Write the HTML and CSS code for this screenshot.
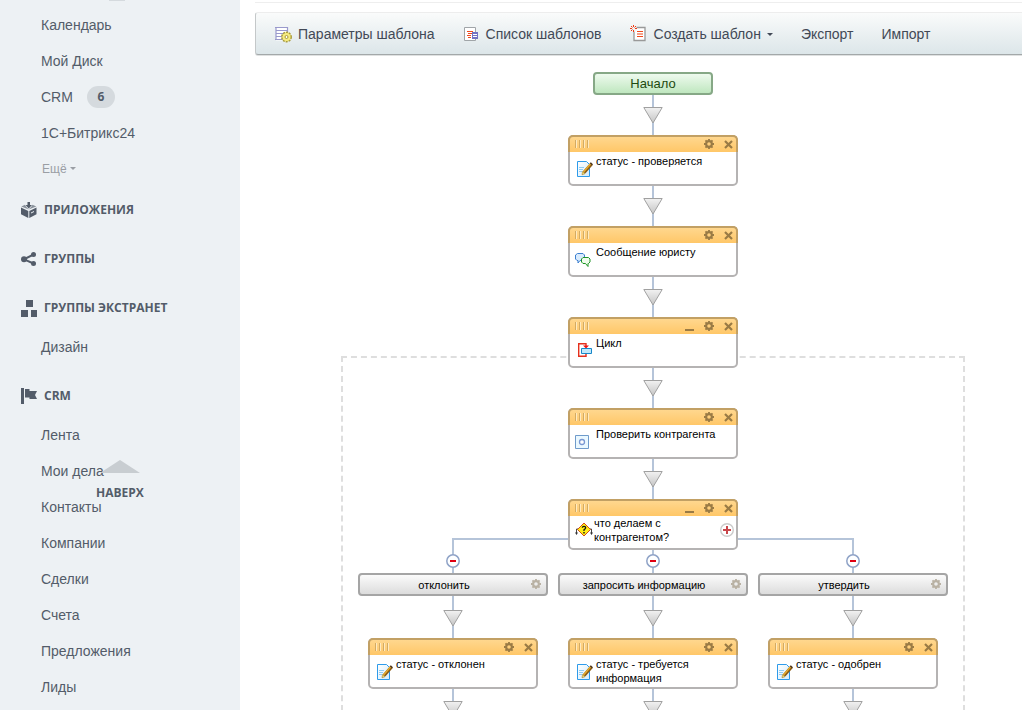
FILE: index.html
```html
<!DOCTYPE html>
<html lang="ru">
<head>
<meta charset="utf-8">
<title>Шаблон бизнес-процесса</title>
<link rel="stylesheet" href="styles.css">
</head>
<body>
<svg class="sprite" aria-hidden="true">
  <defs>
    <linearGradient id="arrow-fill" x1="0" y1="0" x2="0" y2="1"><stop offset="0" stop-color="#f2f2f2"/><stop offset="1" stop-color="#c4c4c4"/></linearGradient>
    <linearGradient id="page-fill" x1="0" y1="0" x2="1" y2="1"><stop offset="0" stop-color="#fff"/><stop offset="1" stop-color="#d3ebfb"/></linearGradient>
  </defs>
  <symbol id="arrow" viewBox="0 0 20 17"><path d="M.8 .5H19.200L10 16Z" fill="url(#arrow-fill)" stroke="#a0a0a0"/></symbol>
  <symbol id="gear" viewBox="0 0 11 11"><g fill="currentColor"><path fill-rule="evenodd" d="M5.500 1.200a4.300 4.300 0 1 0 0 8.600a4.300 4.300 0 0 0 0-8.600zM5.500 3.500a2 2 0 1 1 0 4a2 2 0 0 1 0-4z"/><path d="M4.500 0h2v2h-2zM4.500 9h2v2h-2zM0 4.500h2v2H0zM9 4.500h2v2H9zM.9 2.300L2.300.9l1.400 1.400L2.300 3.700zM7.300 2.300L8.700.9l1.400 1.400L8.700 3.700zM.9 8.700l1.400-1.400 1.400 1.400-1.400 1.400zM7.300 8.700l1.400-1.400 1.400 1.400-1.400 1.400z"/></g></symbol>
  <symbol id="close" viewBox="0 0 9 9"><path d="M1 1L8 8M8 1L1 8" stroke="currentColor" stroke-width="2.200"/></symbol>
  <symbol id="edit" viewBox="0 0 16 16"><path d="M.5 .5H9.500L12.500 3.500V15.500H.5Z" fill="url(#page-fill)" stroke="#2d9bea"/><path d="M2 6.500h5M2 8.500h4M2 10.500h3" stroke="#8ecbf3"/><path d="M7 11.500L14.500 3" stroke="#8a5a14" stroke-width="3.400"/><path d="M6.500 11L13.500 3" stroke="#e6ac2c" stroke-width="1.500"/><path d="M5 13.800L5.500 10.500L8 12.700Z" fill="#ffe36b" stroke="#8a6a1b" stroke-width=".5"/><path d="M13.300 1.800l2.200 2" stroke="#4a3217" stroke-width="1.500"/></symbol>
  <symbol id="chat" viewBox="0 0 16 14"><path d="M2.500.5H8L9.500 2V6L8 7.500H5L3 10V7.500H2L.5 6V2Z" fill="#d8ebfd" stroke="#3c7fd0"/><path d="M8 4.500H13.500L15 6V9L13.500 10.500H13V13.500L10.500 10.500H8L6.500 9V6Z" fill="#effcec" stroke="#1e9426"/></symbol>
  <symbol id="loop" viewBox="0 0 16 14"><path d="M9 3V.7H1.700V13.300H9V11" fill="none" stroke="#e5301c" stroke-width="1.400"/><path d="M6 2.500H12L9 5.500Z" fill="#e11"/><path d="M4.500 5.500H14.500V10.500H4.500Z" fill="#bfe8fb" stroke="#1787c9"/></symbol>
  <symbol id="activity" viewBox="0 0 14 14"><path d="M.5.5H13.500V13.500H.5Z" fill="#eaf8ff" stroke="#6f9bcb"/><circle cx="7" cy="7" r="2.500" fill="#fff" stroke="#7897d2" stroke-width="1.300"/></symbol>
  <symbol id="question" viewBox="0 0 18 16"><path d="M3 7H1.500V12M15 7H16.500V12" fill="none" stroke="#444"/><path d="M0 10.500H3L1.500 13ZM15 10.500H18L16.500 13Z" fill="#333"/><path d="M9 1L15.500 7.500L9 14L2.500 7.500Z" fill="#ffee14" stroke="#d44b16"/><path d="M7.300 5.800Q7.400 4.300 9 4.300Q10.700 4.300 10.600 5.800Q10.400 6.800 9 7.700V9" fill="none" stroke="#111" stroke-width="1.300"/><path d="M8.300 10h1.400v1.400H8.300z" fill="#111"/></symbol>
  <symbol id="plus" viewBox="0 0 14 14"><circle cx="7" cy="7" r="6.300" fill="#fff" stroke="#cbcbcb" stroke-width="1.400"/><path d="M7 3V11M3 7H11" stroke="#c8464b" stroke-width="2"/></symbol>
  <symbol id="minus" viewBox="0 0 14 14"><circle cx="7" cy="7" r="6.200" fill="#fff" stroke="#8fa3c7" stroke-width="1.500"/><path d="M4 7H10" stroke="#e00012" stroke-width="2"/></symbol>
</svg>

<div class="page">
  <nav class="sidebar" aria-label="Меню">
    <span class="sidebar-edge"></span>
    <ul class="menu">
      <li><a class="menu-link" href="#">Календарь</a></li>
      <li><a class="menu-link" href="#">Мой Диск</a></li>
      <li><a class="menu-link" href="#">CRM <span class="counter">6</span></a></li>
      <li><a class="menu-link" href="#">1С+Битрикс24</a></li>
      <li><button class="menu-more" type="button">Ещё<span class="caret"></span></button></li>
    </ul>
    <h2 class="menu-title"><svg class="menu-icon" viewBox="0 0 16 16"><path d="M0 5.500L7.300 9V16L0 12.200ZM15.500 5.500L8.300 9V16L15.500 12.200Z" fill="#535c69"/><path d="M6.500 0H9V3H11L7.700 6.500L4.500 3H6.500Z" fill="#535c69"/><path d="M.3 4.600L4 2.800L5 4.500L7.700 7.400ZM15.300 4.600L11.500 2.800L10.500 4.500L7.700 7.400Z" fill="#8a929b"/><path d="M10 11L13 9.500" stroke="#edf1f4"/></svg>ПРИЛОЖЕНИЯ</h2>
    <h2 class="menu-title"><svg class="menu-icon" viewBox="0 0 16 16"><path d="M12.500 3.500L3 8.300L12.500 12.500" fill="none" stroke="#535c69" stroke-width="2"/><circle cx="12.500" cy="3.500" r="2.500" fill="#535c69"/><circle cx="3" cy="8.200" r="3" fill="#535c69"/><circle cx="12.500" cy="12.500" r="2.500" fill="#535c69"/></svg>ГРУППЫ</h2>
    <h2 class="menu-title"><svg class="menu-icon menu-icon-tall" viewBox="0 0 16 17"><path d="M5 0h7v7H5zM0 10h7v7H0zM10 10h6v7h-6z" fill="#535c69"/></svg>ГРУППЫ ЭКСТРАНЕТ</h2>
    <ul class="menu menu-section">
      <li><a class="menu-link" href="#">Дизайн</a></li>
    </ul>
    <h2 class="menu-title"><svg class="menu-icon" viewBox="0 0 16 16"><path d="M0 0H3V16H0ZM4 1H8.500V3H16L14 7L16 11H8.500V9.500H4Z" fill="#535c69"/></svg>CRM</h2>
    <ul class="menu menu-section">
      <li><a class="menu-link" href="#">Лента</a></li>
      <li><a class="menu-link" href="#">Мои дела</a></li>
      <li><a class="menu-link" href="#">Контакты</a></li>
      <li><a class="menu-link" href="#">Компании</a></li>
      <li><a class="menu-link" href="#">Сделки</a></li>
      <li><a class="menu-link" href="#">Счета</a></li>
      <li><a class="menu-link" href="#">Предложения</a></li>
      <li><a class="menu-link" href="#">Лиды</a></li>
    </ul>
    <a class="to-top" href="#"><svg class="to-top-icon" viewBox="0 0 40 13"><path d="M20 0L40 13H0Z" fill="#c8cdd1"/></svg>НАВЕРХ</a>
  </nav>

  <main class="main">
    <div class="toolbar" role="toolbar">
      <button class="tool" type="button"><svg class="tool-icon" viewBox="0 0 18 18"><path d="M1 2.500H13V15.500H1Z" fill="#fff"/><path d="M0 2.500H13M1 5.500H13M1 8.500H13M1 11.500H13M0 14.500H13M1 2V15M12.500 2V15" stroke="#9999cc" stroke-width="1.200"/><circle cx="11.500" cy="12" r="4.700" fill="#f1e66b" stroke="#a89a3c" stroke-width="1.500" stroke-dasharray="2 1"/><circle cx="11.500" cy="12" r="3.800" fill="#f6ec83"/><circle cx="11.500" cy="12" r="1.500" fill="#fff" stroke="#a89a3c"/></svg>Параметры шаблона</button>
      <button class="tool" type="button"><svg class="tool-icon" viewBox="0 0 18 18"><path d="M1.500 2.500H12.500V15.500H1.500Z" fill="#fff" stroke="#a0a5a8"/><path d="M4 6.500H10M5 8.500H10M4 10.500H8M5 12.500H8" stroke="#f04a1d" stroke-width="1.200"/><path d="M9 7H15V14H9Z" fill="#7373c4"/><path d="M10 9.500H14M10 11.500H14" stroke="#fff"/></svg>Список шаблонов</button>
      <button class="tool tool-create" type="button"><svg class="tool-icon" viewBox="0 0 18 18"><path d="M4 2.500H15V15.500H4Z" fill="#fff" stroke="#999" stroke-width="1.300"/><path d="M7 6.500H13M7 9H13M7 11.500H13" stroke="#f04a1d" stroke-width="1.200"/><path d="M3.500 0V7M0 3.500H7M1 1L6 6M6 1L1 6" stroke="#f0f3f4" stroke-width="2"/><path d="M3.500 0V2M3.500 5V7M0 3.500H2M5 3.500H7M1 1L2.500 2.500M6 1L4.500 2.500M1 6L2.500 4.500" stroke="#f23a12"/></svg>Создать шаблон<span class="caret"></span></button>
      <button class="tool" type="button">Экспорт</button>
      <button class="tool" type="button">Импорт</button>
    </div>

    <div class="flow">
      <div class="start">Начало</div>
      <div class="connector"><svg class="arrow"><use href="#arrow"/></svg></div>
      <article class="card">
        <header class="card-head"><span class="grip"></span><button class="act" type="button" aria-label="Настройки"><svg class="gear"><use href="#gear"/></svg></button><button class="act" type="button" aria-label="Удалить"><svg class="close"><use href="#close"/></svg></button></header>
        <div class="card-body"><span class="card-icon"><svg class="icon-edit"><use href="#edit"/></svg></span><p class="card-text">статус - проверяется</p></div>
      </article>
      <div class="connector"><svg class="arrow"><use href="#arrow"/></svg></div>
      <article class="card">
        <header class="card-head"><span class="grip"></span><button class="act" type="button" aria-label="Настройки"><svg class="gear"><use href="#gear"/></svg></button><button class="act" type="button" aria-label="Удалить"><svg class="close"><use href="#close"/></svg></button></header>
        <div class="card-body"><span class="card-icon card-icon-wide"><svg class="icon-chat"><use href="#chat"/></svg></span><p class="card-text">Сообщение юристу</p></div>
      </article>
      <div class="connector"><svg class="arrow"><use href="#arrow"/></svg></div>
      <article class="card">
        <header class="card-head"><span class="grip"></span><button class="act act-fold" type="button" aria-label="Свернуть"></button><button class="act" type="button" aria-label="Настройки"><svg class="gear"><use href="#gear"/></svg></button><button class="act" type="button" aria-label="Удалить"><svg class="close"><use href="#close"/></svg></button></header>
        <div class="card-body"><span class="card-icon"><svg class="icon-chat"><use href="#loop"/></svg></span><p class="card-text">Цикл</p></div>
      </article>

      <section class="loop">
        <div class="connector"><svg class="arrow"><use href="#arrow"/></svg></div>
        <article class="card">
          <header class="card-head"><span class="grip"></span><button class="act" type="button" aria-label="Настройки"><svg class="gear"><use href="#gear"/></svg></button><button class="act" type="button" aria-label="Удалить"><svg class="close"><use href="#close"/></svg></button></header>
          <div class="card-body"><span class="card-icon card-icon-wide"><svg class="round"><use href="#activity"/></svg></span><p class="card-text">Проверить контрагента</p></div>
        </article>
        <div class="connector"><svg class="arrow"><use href="#arrow"/></svg></div>
        <article class="card card-condition">
          <header class="card-head"><span class="grip"></span><button class="act act-fold" type="button" aria-label="Свернуть"></button><button class="act" type="button" aria-label="Настройки"><svg class="gear"><use href="#gear"/></svg></button><button class="act" type="button" aria-label="Удалить"><svg class="close"><use href="#close"/></svg></button></header>
          <div class="card-body"><span class="card-icon"><svg class="icon-question"><use href="#question"/></svg></span><p class="card-text">что делаем с контрагентом?</p><button class="add" type="button" aria-label="Добавить ветвь"><svg class="round"><use href="#plus"/></svg></button></div>
        </article>

        <div class="fork">
          <div class="branch">
            <div class="stem"><button class="act" type="button" aria-label="Удалить ветвь"><svg class="round"><use href="#minus"/></svg></button></div>
            <div class="branch-label"><span class="branch-name">отклонить</span><button class="act" type="button" aria-label="Настройки"><svg class="gear"><use href="#gear"/></svg></button></div>
            <div class="connector connector-branch"><svg class="arrow"><use href="#arrow"/></svg></div>
            <article class="card">
              <header class="card-head"><span class="grip"></span><button class="act" type="button" aria-label="Настройки"><svg class="gear"><use href="#gear"/></svg></button><button class="act" type="button" aria-label="Удалить"><svg class="close"><use href="#close"/></svg></button></header>
              <div class="card-body"><span class="card-icon"><svg class="icon-edit"><use href="#edit"/></svg></span><p class="card-text">статус - отклонен</p></div>
            </article>
            <div class="connector"><svg class="arrow"><use href="#arrow"/></svg></div>
          </div>
          <div class="branch">
            <div class="stem"><button class="act" type="button" aria-label="Удалить ветвь"><svg class="round"><use href="#minus"/></svg></button></div>
            <div class="branch-label"><span class="branch-name">запросить информацию</span><button class="act" type="button" aria-label="Настройки"><svg class="gear"><use href="#gear"/></svg></button></div>
            <div class="connector connector-branch"><svg class="arrow"><use href="#arrow"/></svg></div>
            <article class="card">
              <header class="card-head"><span class="grip"></span><button class="act" type="button" aria-label="Настройки"><svg class="gear"><use href="#gear"/></svg></button><button class="act" type="button" aria-label="Удалить"><svg class="close"><use href="#close"/></svg></button></header>
              <div class="card-body"><span class="card-icon"><svg class="icon-edit"><use href="#edit"/></svg></span><p class="card-text">статус - требуется информация</p></div>
            </article>
            <div class="connector"><svg class="arrow"><use href="#arrow"/></svg></div>
          </div>
          <div class="branch">
            <div class="stem"><button class="act" type="button" aria-label="Удалить ветвь"><svg class="round"><use href="#minus"/></svg></button></div>
            <div class="branch-label"><span class="branch-name">утвердить</span><button class="act" type="button" aria-label="Настройки"><svg class="gear"><use href="#gear"/></svg></button></div>
            <div class="connector connector-branch"><svg class="arrow"><use href="#arrow"/></svg></div>
            <article class="card">
              <header class="card-head"><span class="grip"></span><button class="act" type="button" aria-label="Настройки"><svg class="gear"><use href="#gear"/></svg></button><button class="act" type="button" aria-label="Удалить"><svg class="close"><use href="#close"/></svg></button></header>
              <div class="card-body"><span class="card-icon"><svg class="icon-edit"><use href="#edit"/></svg></span><p class="card-text">статус - одобрен</p></div>
            </article>
            <div class="connector"><svg class="arrow"><use href="#arrow"/></svg></div>
          </div>
        </div>
      </section>
    </div>
  </main>
</div>
</body>
</html>
```

FILE: styles.css
```css
* {
  box-sizing: border-box;
}

body {
  margin: 0;
  font-family: "Liberation Sans", Arial, sans-serif;
  font-size: 14px;
  background: #fff;
}

button {
  padding: 0;
  border: 0;
  background: none;
  color: inherit;
  font: inherit;
}

a {
  color: inherit;
  text-decoration: none;
}

svg {
  display: block;
}

.sprite {
  position: absolute;
  width: 0;
  height: 0;
}

.page {
  display: flex;
  height: 100vh;
  overflow: hidden;
}

/* Sidebar */

.sidebar {
  position: relative;
  flex: 0 0 240px;
  overflow: hidden;
  background: #edf1f4;
  color: #535c69;
}

.sidebar-edge {
  display: block;
  width: 16px;
  height: 1px;
  margin: 0 0 6px 109px;
  background: #d5dade;
}

.menu {
  margin: 0;
  padding: 0 0 0 41px;
  list-style: none;
}

.menu-section {
  padding-bottom: 3px;
}

.menu-link {
  display: flex;
  align-items: center;
  gap: 14px;
  height: 36px;
}

.counter {
  width: 28px;
  border-radius: 11px;
  background: #d5dade;
  font: bold 12px/22px "Open Sans", sans-serif;
  text-align: center;
}

.menu-more {
  display: flex;
  align-items: center;
  gap: 3px;
  height: 31px;
  padding: 4px 0 0 1px;
  color: #9a9ea4;
  font-size: 12px;
}

.caret {
  border: 3px solid transparent;
  border-top-color: currentColor;
  border-bottom-width: 0;
}

.menu-title {
  display: flex;
  align-items: center;
  gap: 7px;
  height: 42px;
  margin: 7px 0 0;
  padding-left: 21px;
  font: bold 12px/16px "Open Sans", sans-serif;
}

.menu-icon {
  width: 16px;
  height: 16px;
}

.menu-icon-tall {
  height: 17px;
}

.to-top {
  position: absolute;
  top: 460px;
  left: 0;
  display: flex;
  flex-direction: column;
  align-items: center;
  gap: 12px;
  width: 100%;
  font: bold 12px/16px "Open Sans", sans-serif;
}

.to-top-icon {
  width: 40px;
  height: 13px;
}

/* Main area */

.main {
  flex: 1;
  min-width: 0;
  margin: 2px 0 0 15px;
  border-top: 1px solid #eee;
}

.toolbar {
  display: flex;
  align-items: center;
  gap: 28px;
  height: 43px;
  margin-top: 9px;
  padding: 1px 0 0 19px;
  border: solid;
  border-width: 1px 0 1px 1px;
  border-color: #ededed transparent #a3a8a9 #c4c8c9;
  border-radius: 3px 0 0 3px;
  background: linear-gradient(#fafbfb, #dce6e9);
  box-shadow: 0 1px #dfe1e1;
  color: #424956;
}

.tool {
  display: flex;
  align-items: center;
  gap: 5px;
  white-space: nowrap;
}

.tool-create {
  gap: 6px;
}

.tool-icon {
  width: 18px;
  height: 18px;
}

/* Diagram */

.flow {
  display: flex;
  flex-direction: column;
  align-items: center;
  padding: 17px 0 0 29px;
  color: #000;
  font-size: 11px;
  line-height: 14px;
}

.start {
  width: 120px;
  border: 2px solid #86a886;
  border-radius: 4px;
  background: linear-gradient(#eefaee, #bfe7bf);
  color: #1e4b10;
  font-size: 13px;
  line-height: 19px;
  text-align: center;
}

.connector {
  width: 20px;
  height: 40px;
  padding-top: 12px;
  background: linear-gradient(#b5c4d9, #b5c4d9) center / 2px 100% no-repeat;
}

.connector-branch {
  height: 42px;
  padding-top: 14px;
}

.arrow {
  width: 20px;
  height: 17px;
}

.card {
  z-index: 1;
  width: 170px;
  min-height: 51px;
  border: 2px solid #b5b3b3;
  border-radius: 5px;
  background: #fff;
}

.card-head {
  display: flex;
  align-items: center;
  gap: 10px;
  height: 17px;
  margin: -2px -2px 0;
  padding: 0 3px 1px 5px;
  border: 2px solid #c2a064;
  border-bottom: 0;
  border-radius: 5px 5px 0 0;
  background: linear-gradient(#ffd78e, #ffc768);
  color: #9a7b45;
}

.grip {
  width: 14px;
  height: 8px;
  margin-right: auto;
  background: repeating-linear-gradient(90deg, #d3ab63 0 1px, #ffeac0 1px 2px, transparent 2px 4px);
}

.act {
  display: block;
}

.act-fold {
  align-self: flex-end;
  width: 9px;
  height: 2px;
  margin-bottom: 2px;
  background: currentColor;
}

.gear {
  width: 10px;
  height: 10px;
}

.close {
  width: 9px;
  height: 9px;
}

.card-body {
  display: flex;
  align-items: flex-start;
}

.card-icon {
  flex: none;
  width: 26px;
  padding: 9px 0 0 7px;
}

.card-icon-wide {
  padding: 10px 0 0 5px;
}

.card-text {
  flex: 1;
  margin: 0;
  padding-top: 2px;
}

.icon-edit {
  width: 16px;
  height: 16px;
}

.icon-chat {
  width: 16px;
  height: 14px;
}

.icon-question {
  width: 18px;
  height: 16px;
}

.card-condition .card-icon {
  width: 24px;
  padding: 6px 0 0 5px;
}

.card-condition .card-text {
  padding-top: 0;
}

.add {
  align-self: center;
  margin-right: 2px;
}

.round {
  width: 14px;
  height: 14px;
}

.loop {
  display: flex;
  flex-direction: column;
  align-items: center;
  width: 624px;
  margin-top: -12px;
  padding-top: 10px;
  padding-bottom: 20px;
  border: 2px dashed #dedede;
}

.fork {
  position: relative;
  display: grid;
  grid-template-columns: repeat(3, 190px);
  gap: 10px;
  margin-top: -12px;
}

.fork::before {
  content: "";
  position: absolute;
  top: 0;
  right: 94px;
  left: 94px;
  height: 2px;
  background: #b5c4d9;
}

.branch {
  display: flex;
  flex-direction: column;
  align-items: center;
}

.stem {
  height: 35px;
  padding-top: 16px;
  background: linear-gradient(#b5c4d9, #b5c4d9) center / 2px 100% no-repeat;
}

.branch-label {
  display: flex;
  align-items: center;
  align-self: stretch;
  gap: 3px;
  height: 23px;
  padding: 0 5px 1px 0;
  border: 2px solid #a5a5a5;
  border-radius: 4px;
  background: linear-gradient(#fbfbfb, #dcdcdc);
}

.branch-name {
  flex: 1;
  padding-top: 2px;
  text-align: center;
}

.branch-label .act {
  color: #b9b1a3;
}
```
